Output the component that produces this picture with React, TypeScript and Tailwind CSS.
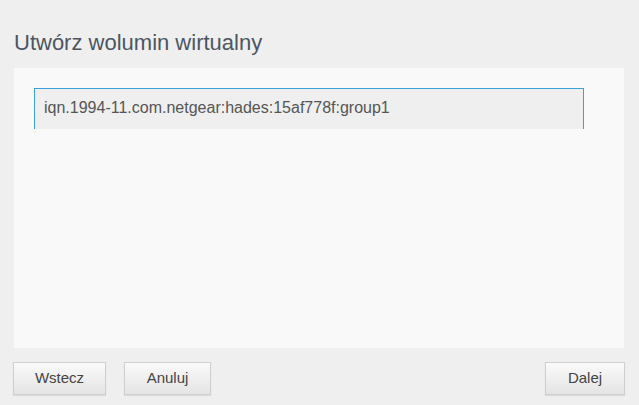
import React from "react";

export default function App() {
  const btn =
    "h-[33px] border border-[#cfcfcf] bg-gradient-to-b from-[#fafafa] to-[#e4e4e4] text-[15px] text-[#444] shadow-[0_1px_1px_rgba(0,0,0,0.08)]";
  return (
    <div
      className="w-[639px] h-[405px] bg-[#efefef] flex flex-col"
      style={{ fontFamily: '"Liberation Sans", Arial, sans-serif' }}
    >
      <div className="pl-[14px] pt-[30px] h-[68px] text-[22px] leading-[26px] text-[#4b5662]">
        Utwórz wolumin wirtualny
      </div>
      <div className="mx-[14px] w-[610px] h-[280px] bg-[#f9f9f9] pt-[20px] pl-[20px]">
        <div className="w-[550px] h-[41px] border-t border-l border-r border-[#3aa2d8] bg-[#efefef] pl-[9px] pt-[10px] text-[16px] leading-[18px] text-[#555]">
          iqn.1994-11.com.netgear:hades:15af778f:group1
        </div>
      </div>
      <div className="flex items-start pt-[14px] px-[13px] pr-[14px]">
        <button className={`${btn} w-[93px]`}>Wstecz</button>
        <button className={`${btn} w-[87px] ml-[18px]`}>Anuluj</button>
        <div className="flex-1" />
        <button className={`${btn} w-[80px]`}>Dalej</button>
      </div>
    </div>
  );
}
